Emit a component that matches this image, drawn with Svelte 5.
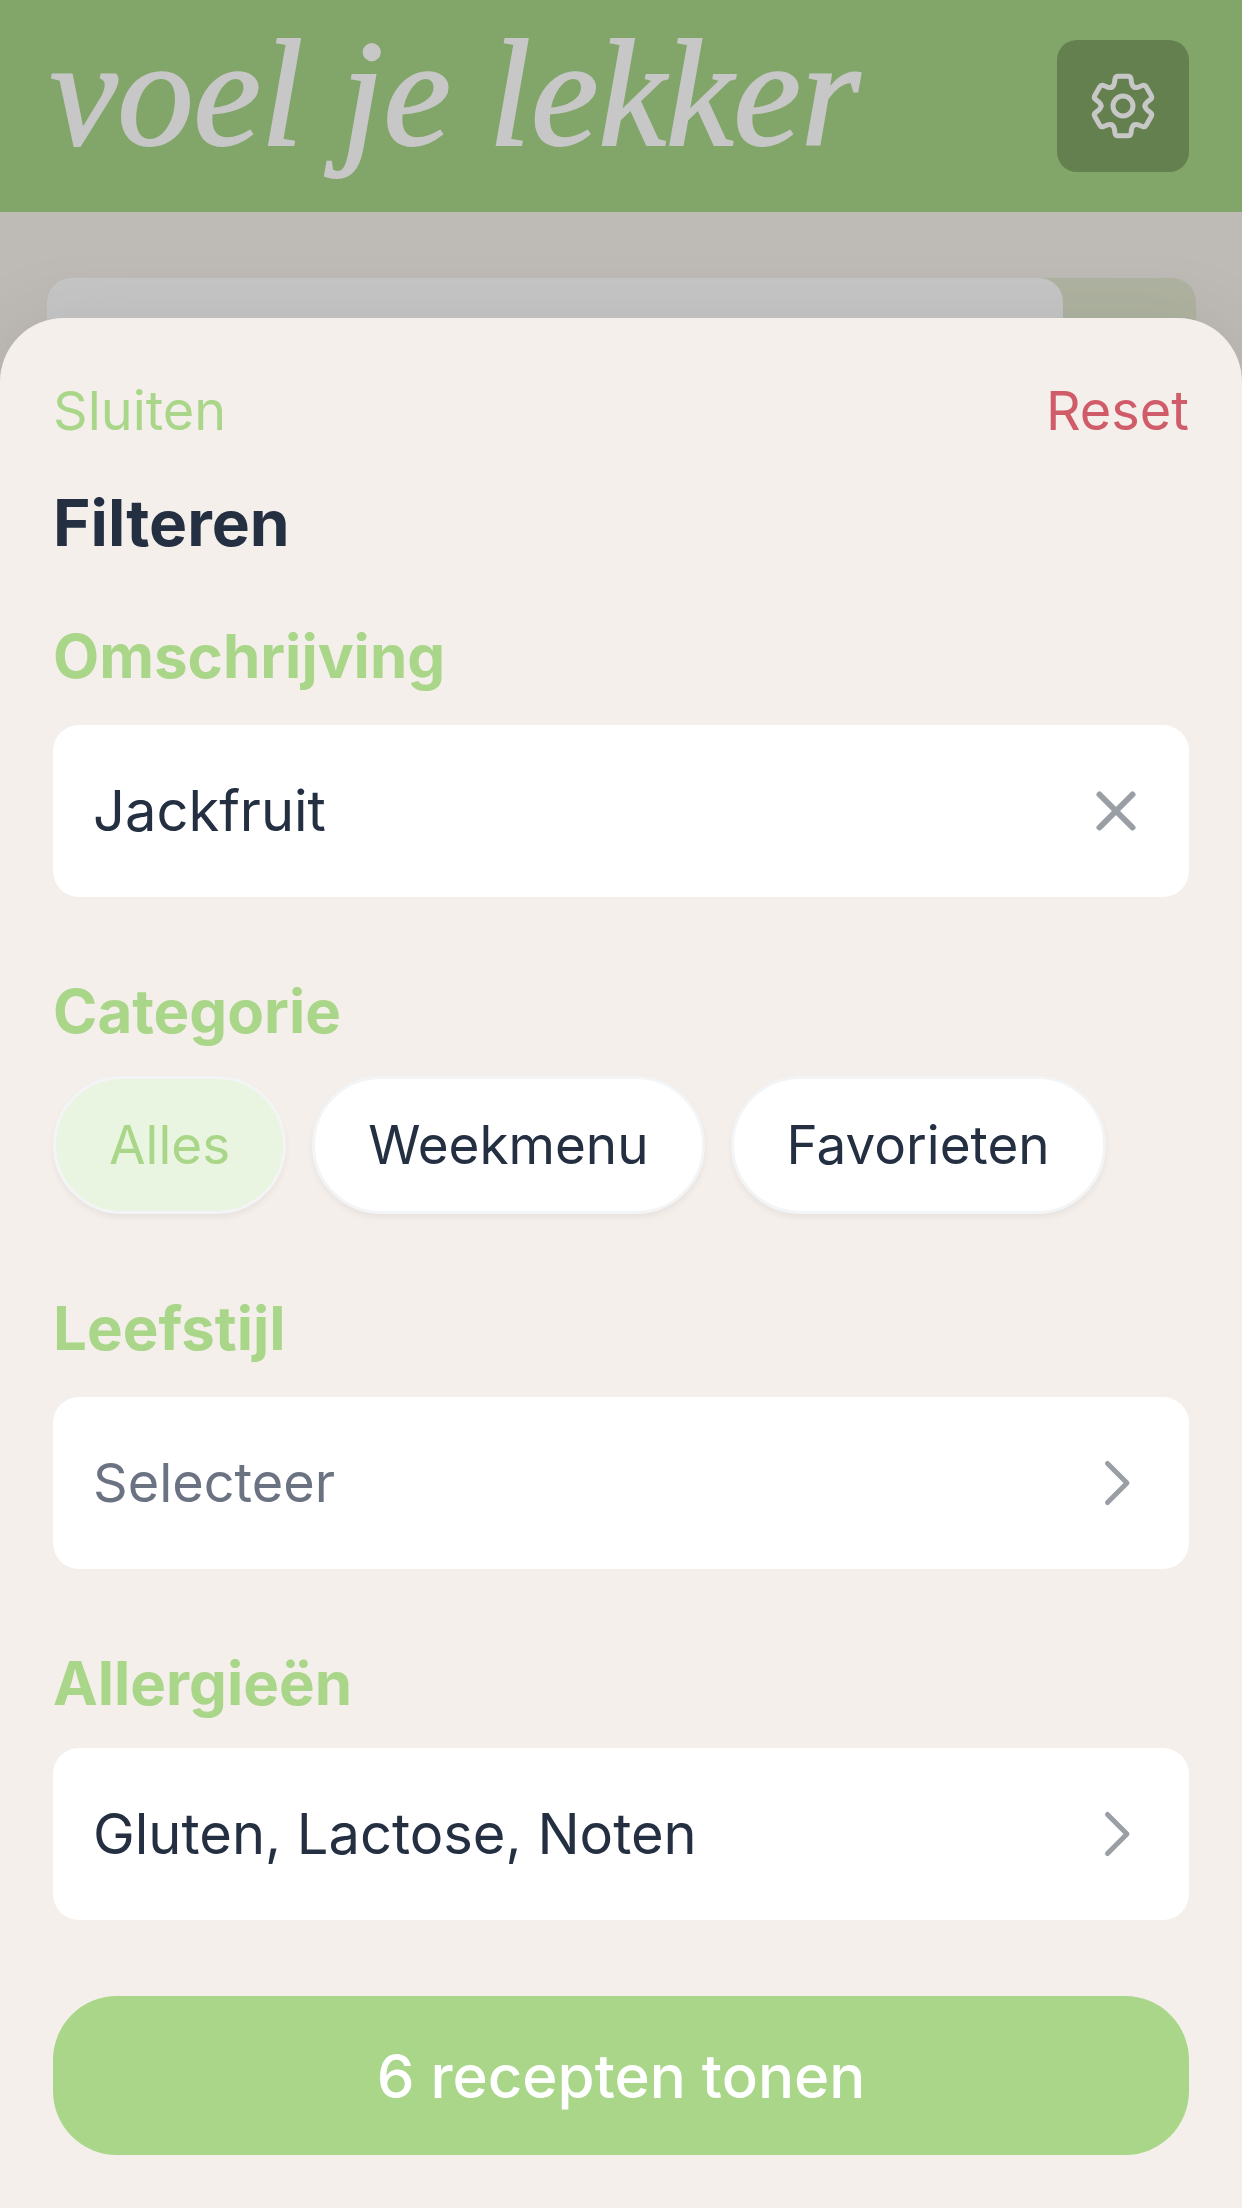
<script>
  let query = $state('Jackfruit');
  let category = $state('Alles');
  const categories = ['Alles', 'Weekmenu', 'Favorieten'];
  const teeth = [0, 60, 120, 180, 240, 300];

  function reset() {
    query = '';
    category = 'Alles';
  }
</script>

{#snippet chevron()}
  <svg class="chevron" viewBox="0 0 48 52" aria-hidden="true">
    <path d="M15.500 6.500 35 26 15.500 45.500" />
  </svg>
{/snippet}

<div class="app">
  <header class="topbar">
    <span class="brand">voel je lekker</span>
    <button class="settings" type="button" aria-label="Instellingen">
      <svg viewBox="-33 -33 66 66" aria-hidden="true">
        {#each teeth as angle}
          <path
            transform="rotate({angle})"
            d="M-11 -19C-9.300 -20 -8.900 -21.200 -8.600 -23L-8 -27.200Q-7.500 -29.700 -5 -29.700H5Q7.500 -29.700 8 -27.200L8.600 -23C8.900 -21.200 9.300 -20 11 -19"
          />
        {/each}
        <circle r="10" />
      </svg>
    </button>
  </header>

  <div class="searchbar"><div class="searchbox"></div></div>

  <main class="sheet">
    <div class="actions">
      <button class="link" type="button">Sluiten</button>
      <button class="link danger" type="button" onclick={reset}>Reset</button>
    </div>
    <h1>Filteren</h1>

    <section>
      <label class="heading" for="query">Omschrijving</label>
      <div class="field">
        <input id="query" type="text" bind:value={query} />
        <button class="clear" type="button" aria-label="Wissen" onclick={() => (query = '')}>
          <svg viewBox="0 0 48 48" aria-hidden="true"><path d="M7.500 7.500 40.500 40.500M40.500 7.500 7.500 40.500" /></svg>
        </button>
      </div>
    </section>

    <section class="tight">
      <h2 class="heading" id="category">Categorie</h2>
      <div class="chips" role="group" aria-labelledby="category">
        {#each categories as name}
          <button
            class="chip"
            class:active={category === name}
            type="button"
            aria-pressed={category === name}
            onclick={() => (category = name)}>{name}</button
          >
        {/each}
      </div>
    </section>

    <section>
      <h2 class="heading" id="lifestyle">Leefstijl</h2>
      <button class="field" type="button" aria-describedby="lifestyle">
        <span class="placeholder">Selecteer</span>
        {@render chevron()}
      </button>
    </section>

    <section class="tight">
      <h2 class="heading" id="allergies">Allergieën</h2>
      <button class="field" type="button" aria-describedby="allergies">
        <span>Gluten, Lactose, Noten</span>
        {@render chevron()}
      </button>
    </section>

    <button class="submit" type="button">6 recepten tonen</button>
  </main>
</div>

<style>
  :global(body) {
    margin: 0;
    background: #bebab5;
  }

  .app {
    display: flex;
    flex-direction: column;
    min-height: 100vh;
    font-family: Inter, 'Liberation Sans', sans-serif;
    color: #243042;
  }

  button,
  input {
    margin: 0;
    padding: 0;
    border: 0;
    background: none;
    font: inherit;
    color: inherit;
  }

  button {
    cursor: pointer;
  }

  svg {
    display: block;
    fill: none;
    stroke: currentColor;
    stroke-linecap: round;
    stroke-linejoin: round;
  }

  .topbar {
    position: relative;
    z-index: 1;
    display: flex;
    align-items: flex-start;
    justify-content: space-between;
    padding: 40px 53px 40px 50px;
    background: #82a66a;
    color: #c7c7c7;
  }

  .brand {
    font-family: 'Liberation Serif', serif;
    font-size: 152px;
    font-style: italic;
    line-height: 108px;
    white-space: nowrap;
    -webkit-text-stroke: 2px currentColor;
  }

  .settings {
    display: grid;
    place-items: center;
    width: 132px;
    height: 132px;
    border-radius: 20px;
    background: #64804f;
  }

  .settings svg {
    width: 66px;
    height: 66px;
    stroke-width: 5;
  }

  .searchbar {
    height: 132px;
    margin: 66px 46px 0 47px;
    border-radius: 24px;
    background: #afb3a0;
  }

  .searchbox {
    height: 100%;
    margin-right: 133px;
    border-radius: 24px;
    background: #c6c6c6;
  }

  .sheet {
    position: relative;
    display: flex;
    flex: 1;
    flex-direction: column;
    margin-top: -92px;
    padding: 61px 53px 53px;
    border-radius: 64px 64px 0 0;
    background: #f4efeb;
    box-shadow: 0 0 80px rgba(0, 0, 0, 0.08);
  }

  .actions {
    display: flex;
    justify-content: space-between;
  }

  .link {
    font-size: 54px;
    line-height: 64px;
    color: #a9d689;
  }

  .danger {
    color: #d05c69;
  }

  h1 {
    margin: 40px 0 58px;
    font-size: 64px;
    font-weight: 700;
    line-height: 80px;
  }

  section {
    display: flex;
    flex-direction: column;
    gap: 34px;
    margin-bottom: 79px;
  }

  section:last-of-type {
    margin-bottom: 76px;
  }

  .tight {
    gap: 30px;
  }

  .heading {
    margin: 0;
    font-size: 60px;
    font-weight: 700;
    line-height: 70px;
    color: #a9d689;
  }

  .field {
    display: flex;
    align-items: center;
    justify-content: space-between;
    box-sizing: border-box;
    width: 100%;
    height: 172px;
    padding: 0 49px 0 40px;
    border-radius: 26px;
    background: #fff;
    font-size: 56px;
    line-height: 70px;
    text-align: left;
  }

  .field input {
    flex: 1;
    min-width: 0;
    outline: 0;
  }

  .field svg {
    color: #9a9fa5;
  }

  .clear svg {
    width: 48px;
    height: 48px;
    stroke-width: 6;
  }

  .chevron {
    width: 48px;
    height: 52px;
    stroke-width: 5;
  }

  .placeholder {
    font-size: 54px;
    color: #6b7282;
  }

  .chips {
    display: flex;
    flex-wrap: wrap;
    gap: 26px;
  }

  .chip {
    height: 138px;
    padding: 0 53px;
    border: 3px solid #f3f4f6;
    border-radius: 69px;
    background: #fff;
    box-shadow: 0 4px 6px rgba(0, 0, 0, 0.05);
    font-size: 53px;
    line-height: 64px;
  }

  .chip.active {
    background: #e9f5e1;
    color: #a9d689;
  }

  .submit {
    height: 159px;
    border-radius: 64px;
    background: #a9d689;
    font-size: 60px;
    font-weight: 500;
    line-height: 70px;
    color: #fff;
  }
</style>
